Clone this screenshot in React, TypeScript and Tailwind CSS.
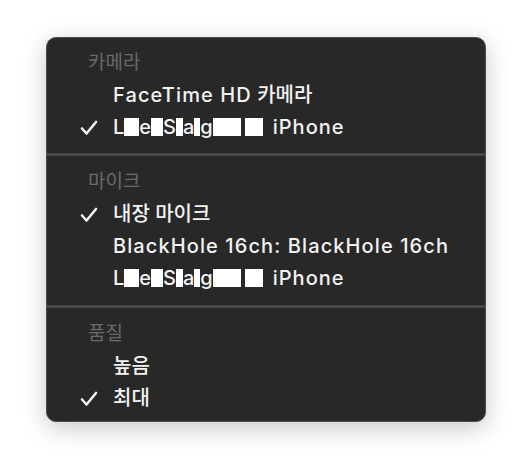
import React from "react";

const font = { fontFamily: 'Inter, "Noto Sans CJK KR", sans-serif' };

function Check() {
  return (
    <svg width="18" height="16" viewBox="0 0 18 16" className="absolute left-[33px] top-[9px]">
      <path d="M2 8.5 L6.5 13.5 L16 2" fill="none" stroke="#f2f2f2" strokeWidth="2.6" strokeLinecap="round" strokeLinejoin="round" />
    </svg>
  );
}

function Header({ children }: { children: React.ReactNode }) {
  return (
    <div className="h-[32px] flex items-center pl-[41px] text-[19px] text-[#6a6a6a]">{children}</div>
  );
}

function Item({ children, checked }: { children: React.ReactNode; checked?: boolean }) {
  return (
    <div className="relative h-[32px] flex items-center pl-[66px] text-[20px] font-medium text-[#f2f2f2] whitespace-nowrap">
      {checked && <Check />}
      {children}
    </div>
  );
}

function L({ children }: { children: React.ReactNode }) {
  return <span className="tracking-[1.1px]">{children}</span>;
}

function B({ w }: { w: number }) {
  return <span className="inline-block bg-white h-[18px] align-middle" style={{ width: w }} />;
}

function Redacted() {
  return (
    <span className="flex items-center">
      <span>L</span>
      <B w={15} />
      <span>e</span>
      <B w={12} />
      <span>S</span>
      <B w={7} />
      <span>a</span>
      <B w={6} />
      <span>g</span>
      <B w={28} />
      <span className="w-[4px]" />
      <B w={18} />
      <span className="ml-[10px] tracking-[1px]">iPhone</span>
    </span>
  );
}

export default function App() {
  return (
    <div className="w-[532px] h-[476px] bg-white pt-[37px] pl-[46px]" style={font}>
      <div className="w-[440px] h-[385px] bg-[#282828] rounded-[10px] border border-[#4d4d4d] shadow-[0_6px_24px_rgba(0,0,0,0.22)] pt-[9px] overflow-hidden">
        <Header>카메라</Header>
        <Item>
          <L>FaceTime HD</L>&nbsp;카메라
        </Item>
        <Item checked>
          <Redacted />
        </Item>
        <div className="h-[3px] bg-[#474747] my-[10px]" />
        <Header>마이크</Header>
        <Item checked>내장 마이크</Item>
        <Item>
          <L>BlackHole 16ch: BlackHole 16ch</L>
        </Item>
        <Item>
          <Redacted />
        </Item>
        <div className="h-[3px] bg-[#474747] mt-[11px] mb-[10px]" />
        <Header>품질</Header>
        <Item>높음</Item>
        <Item checked>최대</Item>
      </div>
    </div>
  );
}
